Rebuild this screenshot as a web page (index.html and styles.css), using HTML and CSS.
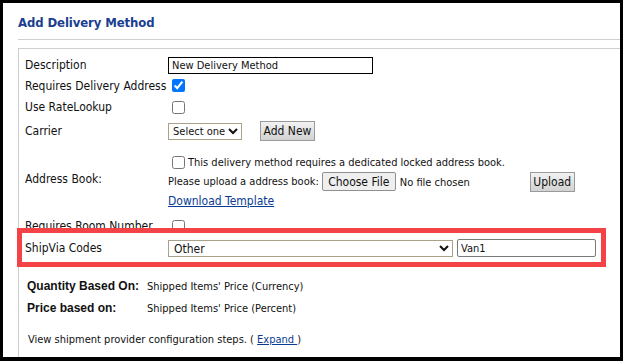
FILE: index.html
```html
<!DOCTYPE html>
<html lang="en">

<head>
    <meta charset="UTF-8">
    <title>Add Delivery Method</title>
    <link rel="stylesheet" href="styles.css">
</head>

<body>
    <div class="frame">
        <!-- page heading -->
        <h1 class="title">Add Delivery Method</h1>
        <hr class="rule">

        <div class="panel">
            <div class="form-grid">
                <label class="lbl">Description</label>
                <div class="fld"><input type="text" class="txt desc" value="New Delivery Method"></div>

                <label class="lbl">Requires Delivery Address</label>
                <div class="fld"><input type="checkbox" checked></div>

                <label class="lbl">Use RateLookup</label>
                <div class="fld"><input type="checkbox"></div>

                <label class="lbl">Carrier</label>
                <div class="fld">
                    <select class="sel carrier">
                        <option>Select one</option>
                    </select>
                    <button class="btn add-new">Add New</button>
                </div>

                <label class="lbl">Address Book:</label>
                <div class="fld addr">
                    <div class="addr-line"><input type="checkbox"><span>This delivery method requires a dedicated locked address book.</span></div>
                    <div class="addr-line upload-line">
                        <span>Please upload a address book:</span>
                        <input type="file" class="file">
                        <button class="btn upload">Upload</button>
                    </div>
                    <div class="addr-line"><a href="#" class="link template">Download Template</a></div>
                </div>

                <label class="lbl">Requires Room Number</label>
                <div class="fld"><input type="checkbox"></div>

                <label class="lbl">ShipVia Codes</label>
                <div class="fld">
                    <select class="sel shipvia">
                        <option>Other</option>
                    </select>
                    <input type="text" class="txt code" value="Van1">
                </div>
            </div>

            <!-- pricing summary -->
            <div class="based">
                <div class="based-row"><span class="based-lbl">Quantity Based On:</span><span>Shipped Items' Price (Currency)</span></div>
                <div class="based-row"><span class="based-lbl">Price based on:</span><span>Shipped Items' Price (Percent)</span></div>
            </div>

            <p class="steps">View shipment provider configuration steps. ( <a href="#" class="link">Expand </a> )</p>

            <!-- highlight around ShipVia row -->
            <div class="highlight"></div>
        </div>
    </div>
</body>

</html>
```

FILE: styles.css
```css
* {
    padding: 0;
    margin: 0;
    box-sizing: border-box;
}

html,
body {
    width: 623px;
    height: 361px;
    overflow: hidden;
    background: #000;
}

.frame {
    width: 623px;
    height: 361px;
    background: #fff;
    border: 3px solid #000;
    border-bottom-width: 4px;
    padding: 12px 0 0 15px;
    font-family: "DejaVu Sans Condensed", "DejaVu Sans", sans-serif;
    font-size: 11px;
    color: #111;
    overflow: hidden;
}

.title {
    font-size: 13px;
    font-weight: 700;
    color: #1b3e90;
    height: 16px;
    line-height: 16px;
    letter-spacing: -0.1px;
}

.rule {
    border: 0;
    border-top: 1px solid #cfcfcf;
    margin-top: 8px;
}

.panel {
    position: relative;
    margin-top: 8px;
    border: 1px solid #cfcfcf;
    border-right: 0;
    height: 320px;
    padding: 6px 0 0 6px;
}

.form-grid {
    display: grid;
    grid-template-columns: 143px 1fr;
    grid-template-rows: 20px 21px 22px 26px 70px 24px 20px;
}

.lbl {
    display: flex;
    align-items: center;
    white-space: nowrap;
    font-size: 12px;
}

.fld {
    display: flex;
    align-items: center;
}

input[type="checkbox"] {
    width: 13px;
    height: 13px;
    margin: 0 3px 0 4px;
}

.txt {
    font-family: inherit;
    font-size: 11px;
    color: #111;
    height: 17px;
    padding: 0 3px;
    border: 1px solid #000;
    outline: none;
}

.desc {
    width: 205px;
}

.code {
    width: 139px;
    height: 18px;
    border: 1px solid #7a7a7a;
    border-radius: 2px;
    margin-left: 4px;
}

.sel {
    font-family: inherit;
    font-size: 12px;
    color: #111;
    height: 17px;
    border: 1px solid #a9a18a;
    border-radius: 0;
    background: #fff;
    padding-left: 1px;
}

.carrier {
    width: 74px;
    font-size: 11px;
    padding-left: 0;
}

.shipvia {
    width: 285px;
}

.btn {
    font-family: inherit;
    font-size: 12px;
    color: #111;
    height: 20px;
    padding: 0 2px;
    white-space: nowrap;
    border: 1px solid #9a9a9a;
    background: linear-gradient(#f2f2f2, #d2d2d2);
}

.add-new {
    margin-left: 18px;
    width: 55px;
}

.addr {
    flex-direction: column;
    align-items: flex-start;
    justify-content: flex-start;
    padding-top: 8px;
    font-size: 11px;
}

.addr-line {
    display: flex;
    align-items: center;
    height: 20px;
    white-space: nowrap;
}

.upload-line {
    height: 19px;
}

.file {
    font-family: inherit;
    font-size: 11px;
    margin-left: 3px;
    width: 203px;
}

.file::file-selector-button {
    font-family: inherit;
    font-size: 12px;
    height: 19px;
    width: 74px;
    padding: 0;
    margin-right: 4px;
    border: 1px solid #8f8f8f;
    border-radius: 2px;
    background: #efefef;
    color: #111;
}

.upload {
    margin-left: 5px;
    width: 45px;
}

.link {
    color: #0b3c95;
    text-decoration: underline;
}

.template {
    font-size: 12px;
}

.based {
    margin-top: 17px;
    padding-left: 2px;
}

.based-row {
    display: flex;
    align-items: center;
    height: 22px;
    white-space: nowrap;
}

.based-lbl {
    font-family: "Liberation Sans", Arial, sans-serif;
    font-size: 12px;
    font-weight: 700;
    width: 120px;
}

.steps {
    margin-top: 14px;
    padding-left: 3px;
    font-size: 11px;
}

.highlight {
    position: absolute;
    left: -2px;
    top: 179px;
    width: 589px;
    height: 39px;
    border: 5px solid #f44346;
}
```
